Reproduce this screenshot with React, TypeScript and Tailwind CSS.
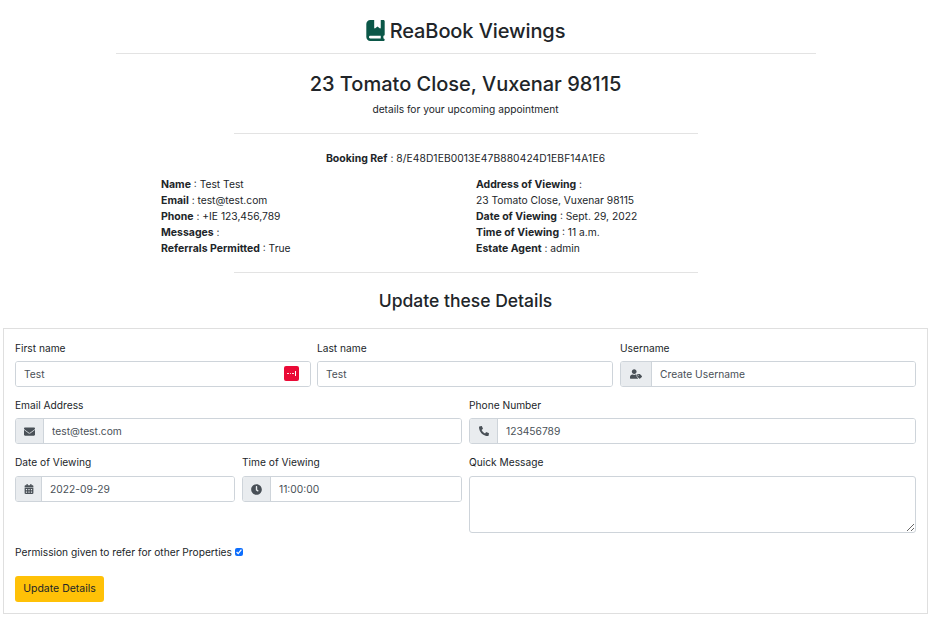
import { FaEnvelope, FaPhoneAlt, FaCalendarAlt, FaClock, FaUserTag } from "react-icons/fa"
import { FaBookBookmark } from "react-icons/fa6"

const inputClass =
  "min-w-0 flex-1 bg-white px-[8px] pt-[1px] text-[10.25px] text-[#495057] outline-none placeholder:text-[#495057]"

function Label({ children, className = "mb-[6px]" }: { children: React.ReactNode; className?: string }) {
  return <div className={`h-[13px] text-[10.2px] leading-[13px] text-[#212529] ${className}`}>{children}</div>
}

function Field({
  label,
  value,
  children,
  className,
  labelClass,
}: {
  label: string
  value: string
  children?: React.ReactNode
  className?: string
  labelClass?: string
}) {
  return (
    <div className={className}>
      <Label className={labelClass}>{label}</Label>
      <div className="flex h-[26px] overflow-hidden rounded-[3px] border border-[#ced4da] bg-white">
        {children}
        <input readOnly value={value} className={inputClass} />
      </div>
    </div>
  )
}

function Addon({ children, width }: { children: React.ReactNode; width: string }) {
  return (
    <div className={`flex shrink-0 items-center justify-center border-r border-[#ced4da] bg-[#e9ecef] text-[#495057] ${width}`}>
      {children}
    </div>
  )
}

function Info({ label, value }: { label: string; value?: string }) {
  return (
    <div className="h-[16px]">
      <span className="text-[10.5px] font-bold">{label}</span> : {value}
    </div>
  )
}

export default function App() {
  return (
    <div className="min-h-[617px] w-[931px] bg-white px-[3px] font-['Inter',sans-serif] text-[#212529]">
      <div className="flex h-[53px] items-center justify-center pr-[1px] pt-[8px]">
        <FaBookBookmark size={21} className="mr-[4px] text-[#0b5748]" />
        <div className="text-[20px] font-medium leading-[24px] tracking-[-0.1px]">ReaBook Viewings</div>
      </div>
      <div className="mx-auto h-px w-[700px] bg-[#e3e3e3]" />

      <div className="mt-[17px] text-center text-[20px] font-medium leading-[26px]">23 Tomato Close, Vuxenar 98115</div>
      <div className="mt-[4px] text-center text-[10.2px] leading-[16px]">details for your upcoming appointment</div>
      <div className="mx-auto mt-[16px] h-px w-[464px] bg-[#e3e3e3]" />

      <div className="mt-[16px] h-[16px] text-center text-[10.25px] leading-[16px]">
        <span className="text-[10.5px] font-bold">Booking Ref</span> : <span className="tracking-[0.1px]">8/E48D1EB0013E47B880424D1EBF14A1E6</span>
      </div>

      <div className="mt-[10px] flex pl-[158px] text-[10.25px] leading-[16px]">
        <div className="w-[315px]">
          <Info label="Name" value="Test Test" />
          <Info label="Email" value="test@test.com" />
          <Info label="Phone" value="+IE 123,456,789" />
          <Info label="Messages" />
          <Info label="Referrals Permitted" value="True" />
        </div>
        <div>
          <Info label="Address of Viewing" />
          <div className="h-[16px]">23 Tomato Close, Vuxenar 98115</div>
          <Info label="Date of Viewing" value="Sept. 29, 2022" />
          <Info label="Time of Viewing" value="11 a.m." />
          <Info label="Estate Agent" value="admin" />
        </div>
      </div>

      <div className="mx-auto mt-[16px] h-px w-[464px] bg-[#e3e3e3]" />
      <div className="mt-[17px] text-center text-[17.5px] font-medium leading-[22px]">Update these Details</div>

      <div className="mt-[16px] h-[286px] border border-[#dfdfdf] px-[11px] pt-[13px]">
        <div className="flex">
          <div className="mr-[6px] w-[296px]">
            <Label>First name</Label>
            <div className="relative flex h-[26px] overflow-hidden rounded-[3px] border border-[#ced4da] bg-white">
              <input readOnly value="Test" className={inputClass} />
              <div className="absolute right-[11px] top-[4px] flex h-[15px] w-[15px] items-center justify-center rounded-[2px] bg-[#ea0a36]">
                <div className="flex items-center gap-[1px]">
                  <span className="h-[1.5px] w-[1.5px] rounded-full bg-white" />
                  <span className="h-[1.5px] w-[1.5px] rounded-full bg-white" />
                  <span className="h-[1.5px] w-[1.5px] rounded-full bg-white" />
                  <span className="h-[5px] w-px bg-white" />
                </div>
              </div>
            </div>
          </div>
          <Field label="Last name" value="Test" className="mr-[7px] w-[296px]" labelClass="mb-[6px]" />
          <Field label="Username" value="Create Username" className="flex-1" labelClass="mb-[6px]">
            <Addon width="w-[31px]">
              <FaUserTag size={12} />
            </Addon>
          </Field>
        </div>

        <div className="mt-[12px] flex gap-[7px]">
          <Field label="Email Address" value="test@test.com" className="flex-1" labelClass="mb-[6px]">
            <Addon width="w-[28px]">
              <FaEnvelope size={11} />
            </Addon>
          </Field>
          <Field label="Phone Number" value="123456789" className="flex-1" labelClass="mb-[6px]">
            <Addon width="w-[28px]">
              <FaPhoneAlt size={10} />
            </Addon>
          </Field>
        </div>

        <div className="mt-[12px] flex gap-[7px]">
          <div className="flex flex-1 gap-[7px]">
            <Field label="Date of Viewing" value="2022-09-29" className="flex-1" labelClass="mb-[7px]">
              <Addon width="w-[26px]">
                <FaCalendarAlt size={10} />
              </Addon>
            </Field>
            <Field label="Time of Viewing" value="11:00:00" className="flex-1" labelClass="mb-[7px]">
              <Addon width="w-[28px]">
                <FaClock size={11} />
              </Addon>
            </Field>
          </div>
          <div className="flex-1">
            <Label className="mb-[7px]">Quick Message</Label>
            <textarea readOnly className="block h-[57px] w-full rounded-[3px] border border-[#ced4da] bg-white outline-none" />
          </div>
        </div>

        <div className="mt-[11px] flex h-[16px] items-center text-[10.2px] leading-[16px]">
          Permission given to refer for other Properties
          <input readOnly type="checkbox" checked className="ml-[3px] h-[8px] w-[8px] accent-[#0d6efd]" />
        </div>

        <button className="mt-[16px] flex h-[26px] w-[89px] items-center justify-center rounded-[3px] bg-[#ffc107] text-[10.5px] text-[#212529]">
          Update Details
        </button>
      </div>
    </div>
  )
}
